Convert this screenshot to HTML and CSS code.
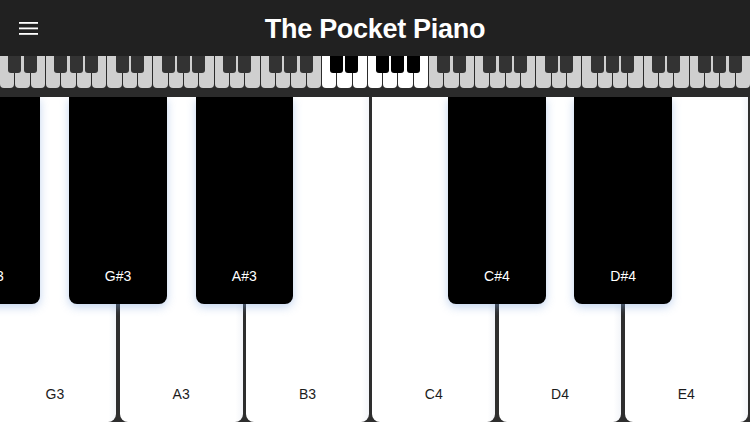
FILE: index.html
```html
<!DOCTYPE html>
<html lang="en">
<head>
<meta charset="utf-8">
<title>The Pocket Piano</title>
<link rel="stylesheet" href="styles.css">
</head>
<body>
<div class="app">
  <header class="topbar">
    <button class="menu" aria-label="Menu">
      <svg width="19" height="13" viewBox="0 0 19 13"><rect x="0" y="0" width="19" height="1.8" fill="#fff"/><rect x="0" y="5.5" width="19" height="1.8" fill="#fff"/><rect x="0" y="11" width="19" height="1.8" fill="#fff"/></svg>
    </button>
    <h1 class="title">The Pocket Piano</h1>
  </header>

  <div class="mini">
    <div class="mini-keys">
      <div class="octave">
        <div class="mw"></div><div class="mw"></div><div class="mw"></div><div class="mw"></div><div class="mw"></div><div class="mw"></div><div class="mw"></div>
        <div class="mb k1"></div><div class="mb k2"></div><div class="mb k4"></div><div class="mb k5"></div><div class="mb k6"></div>
      </div>
      <div class="octave">
        <div class="mw"></div><div class="mw"></div><div class="mw"></div><div class="mw"></div><div class="mw"></div><div class="mw"></div><div class="mw"></div>
        <div class="mb k1"></div><div class="mb k2"></div><div class="mb k4"></div><div class="mb k5"></div><div class="mb k6"></div>
      </div>
      <div class="octave">
        <div class="mw"></div><div class="mw"></div><div class="mw"></div><div class="mw"></div><div class="mw"></div><div class="mw"></div><div class="mw"></div>
        <div class="mb k1"></div><div class="mb k2"></div><div class="mb k4"></div><div class="mb k5"></div><div class="mb k6"></div>
      </div>
      <div class="octave active">
        <div class="mw"></div><div class="mw"></div><div class="mw"></div><div class="mw"></div><div class="mw"></div><div class="mw"></div><div class="mw"></div>
        <div class="mb k1"></div><div class="mb k2"></div><div class="mb k4"></div><div class="mb k5"></div><div class="mb k6"></div>
      </div>
      <div class="octave">
        <div class="mw"></div><div class="mw"></div><div class="mw"></div><div class="mw"></div><div class="mw"></div><div class="mw"></div><div class="mw"></div>
        <div class="mb k1"></div><div class="mb k2"></div><div class="mb k4"></div><div class="mb k5"></div><div class="mb k6"></div>
      </div>
      <div class="octave">
        <div class="mw"></div><div class="mw"></div><div class="mw"></div><div class="mw"></div><div class="mw"></div><div class="mw"></div><div class="mw"></div>
        <div class="mb k1"></div><div class="mb k2"></div><div class="mb k4"></div><div class="mb k5"></div><div class="mb k6"></div>
      </div>
      <div class="octave">
        <div class="mw"></div><div class="mw"></div><div class="mw"></div><div class="mw"></div><div class="mw"></div><div class="mw"></div><div class="mw"></div>
        <div class="mb k1"></div><div class="mb k2"></div><div class="mb k4"></div><div class="mb k5"></div><div class="mb k6"></div>
      </div>
    </div>
  </div>

  <main class="keyboard">
    <div class="keys">
      <div class="white"><div class="black"><span class="label">F#3</span></div></div>
      <div class="white"><span class="label">G3</span><div class="black"><span class="label">G#3</span></div></div>
      <div class="white"><span class="label">A3</span><div class="black"><span class="label">A#3</span></div></div>
      <div class="white"><span class="label">B3</span></div>
      <div class="white"><span class="label">C4</span><div class="black"><span class="label">C#4</span></div></div>
      <div class="white"><span class="label">D4</span><div class="black"><span class="label">D#4</span></div></div>
      <div class="white"><span class="label">E4</span></div>
    </div>
  </main>
</div>
</body>
</html>
```

FILE: styles.css
```css
* { box-sizing: border-box; }

html, body {
  margin: 0;
  padding: 0;
  width: 750px;
  height: 422px;
  overflow: hidden;
  background: #2e2e2e;
  font-family: "Liberation Sans", Arial, sans-serif;
}

.app {
  display: flex;
  flex-direction: column;
  width: 750px;
  height: 422px;
}

/* header */
.topbar {
  position: relative;
  flex: 0 0 56px;
  height: 56px;
  background: #212121;
  display: flex;
  align-items: center;
  justify-content: center;
}

.menu {
  position: absolute;
  left: 19px;
  top: 22px;
  width: 19px;
  height: 13px;
  padding: 0;
  margin: 0;
  border: 0;
  background: none;
  display: block;
}

.menu svg { display: block; }

.title {
  margin: 0;
  padding-top: 2px;
  color: #fff;
  font-size: 27px;
  font-weight: 700;
  letter-spacing: -0.3px;
  line-height: 30px;
}

/* mini keyboard */
.mini {
  flex: 0 0 41px;
  padding-bottom: 9px;
  background: #2b2b2b;
}

.mini-keys {
  display: flex;
  gap: 1px;
  height: 32px;
}

.octave {
  position: relative;
  flex: 1 1 0;
  display: flex;
  gap: 1px;
}

.mw {
  flex: 1 1 0;
  background: #cfcfcf;
  border-radius: 0 0 4px 4px;
}

.mb {
  position: absolute;
  top: 0;
  width: 13px;
  height: 17px;
  background: #333333;
  border-radius: 0 0 3px 3px;
}

.octave.active .mw { background: #ffffff; }
.octave.active .mb { background: #000000; }

.k1 { left: calc((100% + 1px) * 1 / 7 - 7px); }
.k2 { left: calc((100% + 1px) * 2 / 7 - 7px); }
.k4 { left: calc((100% + 1px) * 4 / 7 - 7px); }
.k5 { left: calc((100% + 1px) * 5 / 7 - 7px); }
.k6 { left: calc((100% + 1px) * 6 / 7 - 7px); }

/* main keyboard */
.keyboard {
  flex: 1 1 auto;
  overflow: hidden;
  background: #2e2e2e;
}

.keys {
  display: flex;
  gap: 3.5px;
  height: 100%;
  margin-left: -132.85px;
}

.white {
  position: relative;
  flex: 0 0 122.8px;
  height: 100%;
  background: linear-gradient(90deg, #ffffff 0%, #ffffff 94%, #f3f5f9 100%);
  border-radius: 0 0 8px 8px;
  display: flex;
  align-items: flex-end;
  justify-content: center;
  padding-bottom: 20px;
  color: #1c1c1c;
}

.label {
  font-size: 14px;
  line-height: 16px;
}

.black {
  position: absolute;
  z-index: 2;
  top: 0;
  right: -50.45px;
  width: 97.4px;
  height: 207px;
  background: #000;
  border-radius: 0 0 8px 8px;
  box-shadow: 0 3px 10px rgba(120, 160, 220, 0.45);
  display: flex;
  align-items: flex-end;
  justify-content: center;
  padding-bottom: 20px;
  color: #fff;
}
```
